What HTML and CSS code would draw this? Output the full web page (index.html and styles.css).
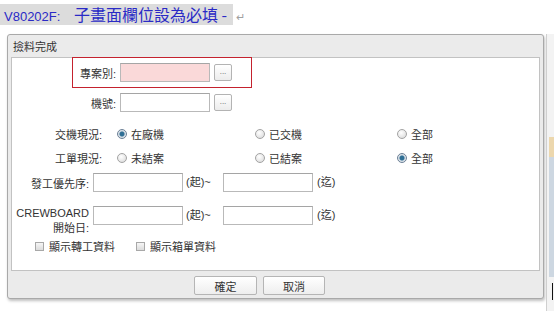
FILE: index.html
```html
<!DOCTYPE html>
<html lang="zh-Hant">
<head>
    <meta charset="UTF-8">
    <title>撿料完成</title>
    <link rel="stylesheet" href="styles.css">
</head>
<body>
    <!-- Document heading line -->
    <div class="doc-line">
        <span class="doc-hl"><span class="doc-code">V80202F:</span> 子畫面欄位設為必填 - </span><span class="doc-mark">&#8629;</span>
    </div>

    <div class="stage">
        <!-- Dialog -->
        <div class="dialog">
            <div class="dialog-title">撿料完成</div>

            <div class="dialog-body">
                <div class="req-box">
                    <div class="field-row">
                        <span class="lbl lbl-pick">專案別:</span>
                        <span class="txt txt-req"></span>
                        <span class="pick-btn">...</span>
                    </div>
                </div>

                <div class="field-row row-machine">
                    <span class="lbl lbl-pick">機號:</span>
                    <span class="txt"></span>
                    <span class="pick-btn">...</span>
                </div>

                <div class="radio-row row-deliver">
                    <span class="lbl lbl-radio">交機現況:</span>
                    <span class="opt opt-a"><span class="radio on"></span>在廠機</span>
                    <span class="opt opt-b"><span class="radio"></span>已交機</span>
                    <span class="opt"><span class="radio"></span>全部</span>
                </div>

                <div class="radio-row row-order">
                    <span class="lbl lbl-radio">工單現況:</span>
                    <span class="opt opt-a"><span class="radio"></span>未結案</span>
                    <span class="opt opt-b"><span class="radio"></span>已結案</span>
                    <span class="opt"><span class="radio on"></span>全部</span>
                </div>

                <div class="range-row row-priority">
                    <span class="lbl lbl-range">發工優先序:</span>
                    <span class="txt txt-range"></span>
                    <span class="range-from">(起)~</span>
                    <span class="txt txt-range"></span>
                    <span class="range-to">(迄)</span>
                </div>

                <div class="range-row row-crew">
                    <span class="lbl lbl-range lbl-two">CREWBOARD<br>開始日:</span>
                    <span class="txt txt-range"></span>
                    <span class="range-from">(起)~</span>
                    <span class="txt txt-range"></span>
                    <span class="range-to">(迄)</span>
                </div>

                <div class="check-row">
                    <span class="chk-item"><span class="chk"></span>顯示轉工資料</span>
                    <span class="chk-item"><span class="chk"></span>顯示箱單資料</span>
                </div>
            </div>

            <div class="dialog-footer">
                <button class="dlg-btn btn-ok" type="button">確定</button>
                <button class="dlg-btn btn-cancel" type="button">取消</button>
            </div>
        </div>

        <!-- Window edge behind the dialog -->
        <div class="side-strip">
            <div class="strip-tan"></div>
            <div class="strip-blue"></div>
            <div class="caret"></div>
        </div>
    </div>
</body>
</html>
```

FILE: styles.css
```css
/* General Styling */
body {
    margin: 0;
    padding: 0;
    background-color: #fff;
    font-family: "Liberation Sans", "Noto Sans CJK TC", sans-serif;
    color: #333;
}

/* Heading line */
.doc-line {
    height: 21px;
    padding-top: 4px;
    line-height: 21px;
    white-space: nowrap;
    font-family: "Noto Sans CJK TC", sans-serif;
    font-size: 16px;
}

.doc-hl {
    display: inline-block;
    height: 21px;
    padding: 0 6px 0 4px;
    background-color: #dcdcdc;
    color: #2a2ac6;
}

.doc-code {
    margin-right: 10px;
    font-family: "Liberation Sans", sans-serif;
    font-size: 13px;
}

.doc-mark {
    margin-left: 3px;
    color: #a0a0a0;
    font-size: 11px;
}

/* Stage */
.stage {
    display: flex;
    align-items: flex-start;
    margin-top: 9px;
    padding-left: 7px;
}

/* Dialog */
.dialog {
    width: 536px;
    border: 1px solid #a9a9a9;
    border-radius: 3px;
    background-color: #ebebeb;
    box-shadow: 1px 2px 3px rgba(0, 0, 0, 0.25);
    font-size: 11px;
}

.dialog-title {
    height: 22px;
    padding-left: 5px;
    line-height: 22px;
    color: #333;
    font-family: "Noto Sans CJK TC", sans-serif;
    font-size: 11px;
}

.dialog-body {
    height: 212px;
    margin: 0 3px;
    border: 1px solid #c2c2c2;
    background-color: #fff;
}

.lbl {
    text-align: right;
    white-space: nowrap;
}

.txt {
    display: block;
    box-sizing: border-box;
    height: 19px;
    border: 1px solid #b9b9b9;
    border-top-color: #a5a5a5;
    background-color: #fff;
}

/* Required field box */
.req-box {
    box-sizing: border-box;
    width: 180px;
    height: 31px;
    margin-left: 60px;
    margin-top: -1px;
    border: 1px solid #c4222e;
    display: flex;
    align-items: center;
}

.field-row {
    display: flex;
    align-items: center;
}

.row-machine {
    margin-top: 5px;
    margin-left: 61px;
}

.lbl-pick {
    width: 43px;
    margin-right: 4px;
}

.field-row .txt {
    width: 90px;
}

.txt-req {
    background-color: #fad9d9;
}

.pick-btn {
    box-sizing: border-box;
    width: 18px;
    height: 17px;
    margin-left: 4px;
    border: 1px solid #b3b3b3;
    border-radius: 2px;
    background: linear-gradient(#ffffff, #ececec);
    color: #666;
    font-family: "DejaVu Sans", sans-serif;
    font-size: 7px;
    line-height: 15px;
    text-align: center;
    letter-spacing: 0;
}

/* Radio rows */
.radio-row {
    display: flex;
    align-items: center;
    height: 18px;
}

.row-deliver {
    margin-top: 13px;
}

.row-order {
    margin-top: 6px;
}

.lbl-radio {
    width: 90px;
    margin-right: 15px;
}

.opt {
    display: flex;
    align-items: center;
    gap: 4px;
}

.opt-a {
    width: 138px;
}

.opt-b {
    width: 142px;
}

.radio {
    box-sizing: border-box;
    width: 10px;
    height: 10px;
    border: 1px solid #a3a3a3;
    border-radius: 50%;
    background: radial-gradient(circle at 40% 35%, #ffffff, #d6d6d6);
}

.radio.on {
    border-color: #6c8096;
    background: radial-gradient(circle, #2f6f95 0, #2f6f95 2px, #cfd9e2 3px, #f4f6f8 5px);
}

/* Range rows */
.range-row {
    display: flex;
    align-items: center;
}

.row-priority {
    margin-top: 6px;
}

.row-crew {
    margin-top: 14px;
    align-items: flex-start;
}

.lbl-range {
    width: 77px;
    margin-right: 4px;
}

.lbl-two {
    line-height: 15px;
}

.txt-range {
    width: 90px;
}

.range-from {
    width: 37px;
    padding-left: 3px;
    line-height: 19px;
}

.range-to {
    padding-left: 4px;
    line-height: 19px;
}

/* Check row */
.check-row {
    display: flex;
    align-items: center;
    gap: 21px;
    height: 14px;
    margin-top: 3px;
    margin-left: 23px;
}

.chk-item {
    display: flex;
    align-items: center;
    gap: 5px;
}

.chk {
    box-sizing: border-box;
    width: 9px;
    height: 9px;
    border: 1px solid #a8a8a8;
    background: linear-gradient(#f6f6f6, #dcdcdc);
}

/* Footer */
.dialog-footer {
    display: flex;
    gap: 6px;
    height: 27px;
    padding-left: 186px;
    padding-top: 5px;
    box-sizing: border-box;
}

.dlg-btn {
    height: 19px;
    padding: 0;
    border: 1px solid #b5b5b5;
    border-radius: 2px;
    background: linear-gradient(#ffffff, #eeeeee);
    color: #333;
    font-family: "Noto Sans CJK TC", sans-serif;
    font-size: 11px;
    line-height: 16px;
}

.btn-ok {
    width: 63px;
}

.btn-cancel {
    width: 62px;
}

/* Side strip */
.side-strip {
    position: relative;
    width: 7px;
    height: 277px;
    margin-left: 2px;
    border-left: 1px solid #cfcfcf;
    background-color: #f3f3f3;
}

.strip-tan {
    height: 20px;
    margin-top: 103px;
    margin-left: 2px;
    background-color: #ecd7ad;
}

.strip-blue {
    height: 120px;
    margin-left: 2px;
    background-color: #cdd7e1;
}

.caret {
    position: absolute;
    left: 5px;
    top: 249px;
    width: 1px;
    height: 17px;
    background-color: #111;
}
```
